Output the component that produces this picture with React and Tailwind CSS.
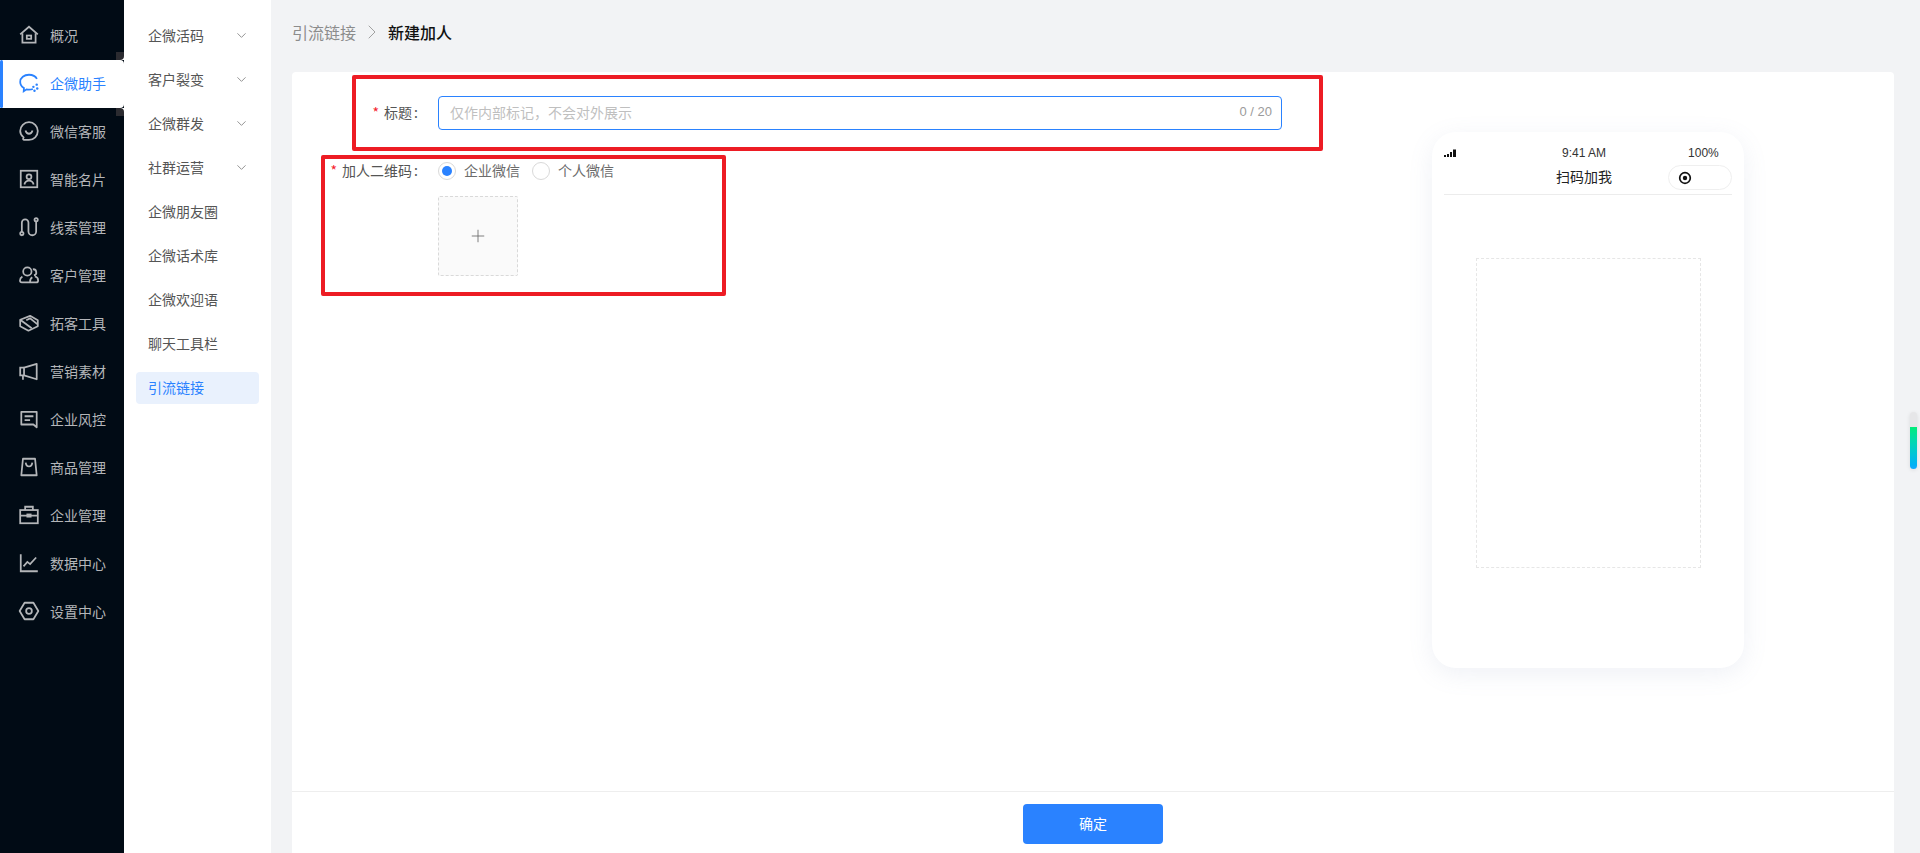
import { ChevronDown, ChevronRight, Plus } from 'lucide-react';

const cjk = 'font-["Noto_Sans_CJK_SC","Noto_Sans",sans-serif]';

// sidebar icons, drawn to match the reference strokes
const icons = {
  home: (
    <>
      <path d="M2 9.500 10 2.500l8 7" />
      <path d="M4 8.500V17h12V8.500" />
      <rect x="8" y="10.500" width="4" height="3" />
    </>
  ),
  chat: (
    <>
      <path d="M13.500 15.500c-1 .4-2.200.6-3.500.6-.8 0-1.500-.1-2.200-.3L5.200 17.500l.2-3C3.300 13.200 2 11.200 2 9c0-3.900 3.600-6.500 8-6.500 3.300 0 6 1.500 7.200 3.800" />
      <circle cx="14" cy="13.500" r="1.100" fill="currentColor" stroke="none" />
      <circle cx="17" cy="11.500" r="1.100" fill="currentColor" stroke="none" />
      <circle cx="17.500" cy="15" r="1.100" fill="currentColor" stroke="none" />
      <circle cx="15" cy="17" r="1.100" fill="currentColor" stroke="none" />
    </>
  ),
  service: (
    <>
      <path d="M10 2a8 8 0 0 1 8 8c0 4.500-3.600 8-8 8H5.500c-.8 0-1-.6-.8-1.200l.4-1C3.200 14.300 2 12.300 2 10a8 8 0 0 1 8-8Z" />
      <path d="M6.800 9.500c.6 2 1.800 3 3.200 3s2.600-1 3.200-3" />
    </>
  ),
  card: (
    <>
      <rect x="2.500" y="2.500" width="15" height="15" />
      <circle cx="10" cy="8" r="2.200" />
      <path d="M5.800 15c.6-2.300 2.200-3.500 4.200-3.500s3.600 1.200 4.200 3.500" />
    </>
  ),
  clue: (
    <>
      <circle cx="3.500" cy="16" r="1.500" />
      <circle cx="16.500" cy="3.500" r="1.500" />
      <path d="M3.500 14.500V6a3 3 0 0 1 6 0v8a3.200 3.200 0 0 0 7 0V5" />
    </>
  ),
  users: (
    <>
      <circle cx="8.500" cy="6.800" r="3.800" />
      <path d="M4 11.500c-1.500.8-2.200 2.200-2.200 3.500 0 1 .7 1.700 1.700 1.700h13c1 0 1.800-.7 1.800-1.800 0-1.700-1.200-3.200-3-3.600" />
      <path d="M11 16.500c-.2-1.800.5-3.500 2-4.500" />
      <path d="M13.500 4.800a2.800 2.800 0 0 1 1 5.500" />
    </>
  ),
  shake: (
    <>
      <path d="M2 7 11 3.500 18 7.500v5.500L9.500 17 2 13Z" strokeLinejoin="round" />
      <path d="M2 7 12.500 14.800" />
      <path d="M7.500 7.500 11 5.800l6.500 5.200" />
    </>
  ),
  horn: (
    <>
      <path d="M5.500 7 17 3.500v14L5.500 14Z" strokeLinejoin="round" />
      <path d="M5.500 7H2v7h3.500" />
      <path d="M4.500 14v4" />
    </>
  ),
  risk: (
    <>
      <path d="M3 3.500h14v14l-3-2.500H3Z" strokeLinejoin="round" />
      <path d="M6 7.500h8M6 11h5" />
    </>
  ),
  bag: (
    <>
      <path d="M4.500 2.500h11l1.500 15H3Z" strokeLinejoin="round" />
      <path d="M7 6c.3 2.300 1.500 3.500 3 3.500s2.700-1.200 3-3.500" />
    </>
  ),
  case: (
    <>
      <rect x="2" y="5.500" width="16" height="12" />
      <path d="M6.500 5.500V2.500h7v3M2 10.500h16" />
      <rect x="8.500" y="9.500" width="3" height="2" fill="currentColor" />
    </>
  ),
  chart: (
    <>
      <path d="M2.500 2v15.500H18" />
      <path d="M5 13l3.500-4 2.500 2 5.500-6" />
    </>
  ),
  gear: (
    <>
      <path d="M6 2.500h8l4.500 7.500-4.500 7.500H6L1.500 10Z" strokeLinejoin="round" />
      <circle cx="10" cy="10" r="2.600" />
    </>
  ),
};

const navItems = [
  ['home', '概况'],
  ['chat', '企微助手', true],
  ['service', '微信客服'],
  ['card', '智能名片'],
  ['clue', '线索管理'],
  ['users', '客户管理'],
  ['shake', '拓客工具'],
  ['horn', '营销素材'],
  ['risk', '企业风控'],
  ['bag', '商品管理'],
  ['case', '企业管理'],
  ['chart', '数据中心'],
  ['gear', '设置中心'],
];

const subItems = [
  ['企微活码', true],
  ['客户裂变', true],
  ['企微群发', true],
  ['社群运营', true],
  ['企微朋友圈'],
  ['企微话术库'],
  ['企微欢迎语'],
  ['聊天工具栏'],
];

const NavIcon = ({ name }) => (
  <svg viewBox="0 0 20 20" fill="none" stroke="currentColor" strokeWidth="1.600" className="h-[22px] w-[22px] shrink-0">
    {icons[name]}
  </svg>
);

const NavItem = ({ icon, label, active }) => (
  <div
    className={`relative flex h-[48px] items-center pb-[2px] pl-[18px] text-[14px] ${
      active ? 'rounded-r-[4px] bg-white text-[#2a82ff]' : 'text-[#b4b6b9]'
    }`}
  >
    {active && <span className="absolute left-0 top-0 h-[48px] w-[3px] rounded-[2px] bg-[#2a82ff]" />}
    <NavIcon name={icon} />
    <span className="ml-[10px]">{label}</span>
  </div>
);

const Radio = ({ checked, label }) => (
  <label className="flex items-center">
    <span className="flex h-[18px] w-[18px] items-center justify-center rounded-full border border-[#d9d9d9] bg-white">
      {checked && <span className="h-[10px] w-[10px] rounded-full bg-[#2a82ff]" />}
    </span>
    <span className="ml-[8px] pb-[2px] text-[14px] text-[#6b6b6b]">{label}</span>
  </label>
);

const FieldLabel = ({ height, children }) => (
  <div className={`flex w-[146px] items-center justify-end pb-[2px] pr-[20px] text-[14px] text-[#555555] ${height}`}>
    <span className="mr-[5px] text-[#f5222d]">*</span>
    {children}
    <span className="ml-[2px]">:</span>
  </div>
);

const App = () => {
  return (
    <div className={`relative flex h-[853px] w-[1920px] overflow-hidden bg-[#f2f3f5] ${cjk}`}>
      {/* Main sidebar */}
      <aside className="relative h-full w-[124px] shrink-0 bg-[#010b15] pt-[12px]">
        {navItems.map(([icon, label, active]) => (
          <NavItem key={label} icon={icon} label={label} active={active} />
        ))}
        {/* corner notches next to the active item */}
        <span className="absolute left-[116px] top-[52px] h-[8px] w-[8px] bg-white">
          <span className="block h-full w-full rounded-br-[4px] bg-[#2b2b30]" />
        </span>
        <span className="absolute left-[116px] top-[108px] h-[8px] w-[8px] bg-white">
          <span className="block h-full w-full rounded-tr-[4px] bg-[#2b2b30]" />
        </span>
      </aside>

      {/* Sub menu */}
      <nav className="h-full w-[147px] shrink-0 bg-white px-[12px] pt-[14px]">
        {subItems.map(([label, hasChildren]) => (
          <div key={label} className="flex h-[44px] items-center justify-between pb-[2px] pl-[12px] pr-[10px] text-[14px] text-[#555555]">
            <span>{label}</span>
            {hasChildren && <ChevronDown size={15} strokeWidth={1.500} className="text-[#8c8c8c]" />}
          </div>
        ))}
        <div className="mt-[6px] flex h-[32px] items-center rounded-[4px] bg-[#e9f1fd] pb-[2px] pl-[12px] text-[14px] text-[#2a82ff]">
          引流链接
        </div>
      </nav>

      {/* Content */}
      <main className="flex h-full min-w-0 flex-1 flex-col pl-[21px] pr-[26px]">
        <div className="flex h-[72px] shrink-0 items-start pt-[19px] text-[16px] leading-[26px]">
          <span className="text-[#8c8c8c]">引流链接</span>
          <ChevronRight size={24} strokeWidth={0.800} className="mx-[4px] mt-[1px] text-[#8c8c8c]" />
          <span className="font-medium text-[#111111]">新建加人</span>
        </div>

        <div className="flex min-h-0 flex-1 flex-col rounded-t-[4px] bg-white">
          <div className="flex flex-1">
            <form className="w-[990px] shrink-0 pt-[24px]">
              <div className="flex">
                <FieldLabel height="h-[34px]">标题</FieldLabel>
                <div className="flex h-[34px] flex-1 items-center justify-between rounded-[4px] border border-[#2a82ff] pb-[2px] pl-[11px] pr-[9px]">
                  <span className="text-[14px] text-[#bfbfbf]">仅作内部标记，不会对外展示</span>
                  <span className="font-['Liberation_Sans',sans-serif] text-[13px] text-[#9b9b9b]">0 / 20</span>
                </div>
              </div>
              <div className="mt-[29px] flex">
                <FieldLabel height="h-[24px]">加人二维码</FieldLabel>
                <div>
                  <div className="flex h-[24px] items-center gap-[12px]">
                    <Radio checked label="企业微信" />
                    <Radio label="个人微信" />
                  </div>
                  <div className="mt-[13px] flex h-[80px] w-[80px] items-center justify-center rounded-[2px] border border-dashed border-[#d9d9d9] bg-[#fafafa]">
                    <Plus size={20} strokeWidth={1} className="text-[#666666]" />
                  </div>
                </div>
              </div>
            </form>

            {/* Phone preview */}
            <div className="ml-auto mr-[150px] mt-[60px] h-[536px] w-[312px] rounded-[24px] bg-white px-[12px] shadow-[0_6px_24px_rgba(120,140,180,0.12)]">
              <div className="flex h-[33px] items-end pb-[3px] font-['Liberation_Sans',sans-serif] text-[12px] text-[#333333]">
                <svg viewBox="0 0 13 9" className="mb-[4px] h-[9px] w-[13px] fill-[#111111]">
                  <rect x="0" y="6" width="2" height="2" />
                  <rect x="3" y="5" width="2" height="3" />
                  <rect x="6" y="3" width="2" height="5" />
                  <rect x="9" y="0.500" width="3" height="7.500" />
                </svg>
                <span className="ml-[105px]">9:41 AM</span>
                <span className="ml-[82px]">100%</span>
              </div>
              <div className="flex h-[30px] items-start border-b border-[#ececec]">
                <span className="ml-[112px] text-[14px] leading-[22px] text-[#222222]">扫码加我</span>
                <span className="ml-[56px] flex h-[25px] w-[64px] items-center rounded-full border border-[#efefef] pl-[9px]">
                  <svg viewBox="0 0 14 14" className="h-[14px] w-[14px]">
                    <circle cx="7" cy="7" r="5.300" fill="none" stroke="#111111" strokeWidth="1.700" />
                    <circle cx="7" cy="7" r="2.200" fill="#111111" />
                  </svg>
                </span>
              </div>
              <div className="mx-auto mt-[63px] h-[310px] w-[225px] border border-dashed border-[#e6e6e6]" />
            </div>
          </div>

          <div className="flex h-[62px] shrink-0 justify-center border-t border-[#eeeeee] pt-[12px]">
            <button type="button" className="h-[40px] w-[140px] rounded-[4px] bg-[#2a82ff] pb-[1px] text-[14px] text-white">
              确定
            </button>
          </div>
        </div>
      </main>

      {/* Red annotation boxes over the form */}
      <div className="absolute left-[352px] top-[75px] h-[76px] w-[971px] rounded-[2px] border-[4px] border-[#ed1c24]" />
      <div className="absolute left-[321px] top-[155px] h-[141px] w-[405px] rounded-[2px] border-[4px] border-[#ed1c24]" />

      {/* Floating scroll handle */}
      <div className="absolute left-[1910px] top-[412px] h-[57px] w-[7px] overflow-hidden rounded-full bg-[#e6e6e8] shadow-[0_1px_4px_rgba(0,0,0,0.1)]">
        <div className="mt-[15px] h-[42px] w-full bg-gradient-to-b from-[#05ec78] to-[#12a9ff]" />
      </div>
    </div>
  );
};

export default App;
